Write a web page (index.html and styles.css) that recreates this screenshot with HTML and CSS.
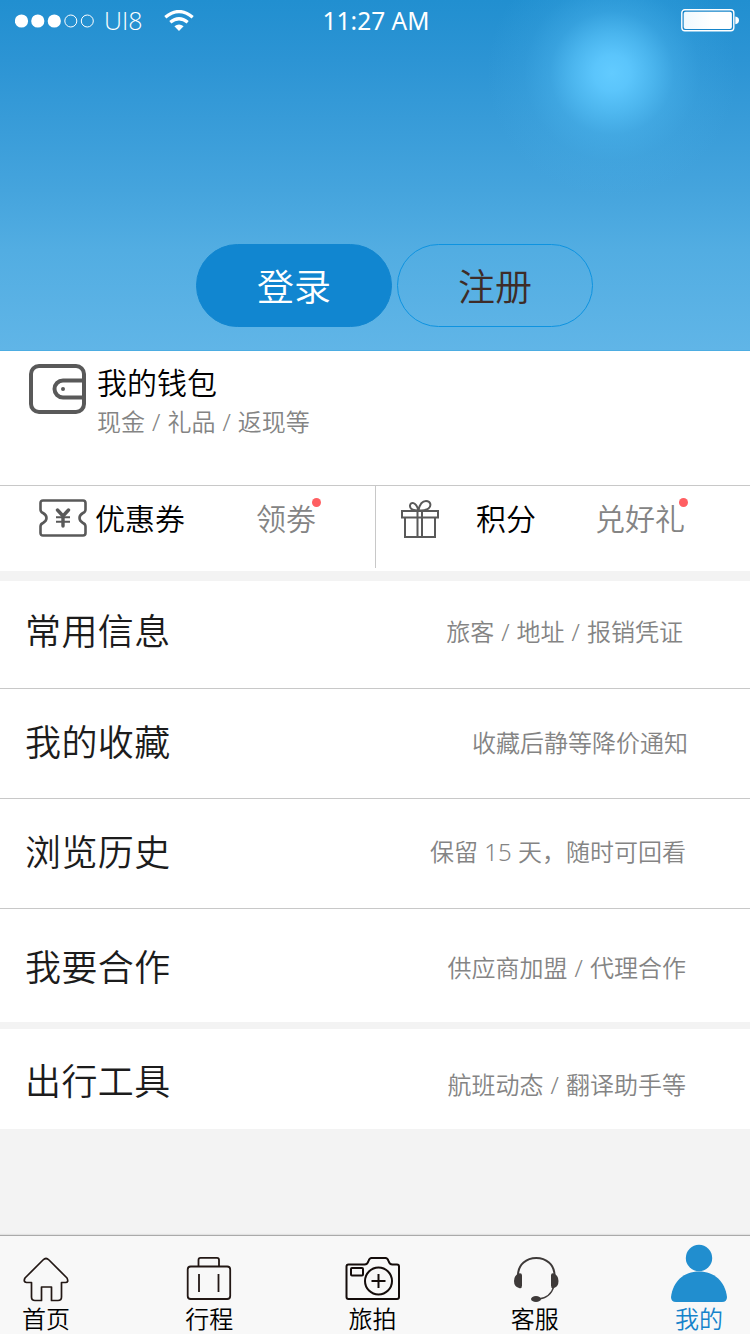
FILE: index.html
```html
<!DOCTYPE html>
<html lang="zh-CN">
<head>
<meta charset="utf-8">
<title>我的</title>
<link rel="stylesheet" href="styles.css">
</head>
<body>
<div class="screen">
  <header class="hero">
    <div class="status">
      <div class="status-left">
        <svg class="signal" width="80" height="16" viewBox="0 0 80 16"><g fill="#fff"><circle cx="6.500" cy="8" r="6.600"/><circle cx="22.800" cy="8" r="6.600"/><circle cx="39.300" cy="8" r="6.600"/></g><g fill="none" stroke="#fff"><circle cx="55.800" cy="8" r="6"/><circle cx="72.300" cy="8" r="6"/></g></svg>
        <span class="carrier">UI8</span>
        <svg class="wifi" width="30" height="22" viewBox="0 0 30 22"><g fill="none" stroke="#fff" stroke-width="3.200"><path d="M1.300 7.200Q15-4.200 28.700 7.200"/><path d="M6.300 12.300Q15 5.200 23.700 12.300"/></g><path fill="#fff" d="M10.400 16.300Q15 12.600 19.600 16.300L15 21Z"/></svg>
      </div>
      <time class="clock">11:27 AM</time>
      <svg class="battery" width="58" height="23" viewBox="0 0 58 23"><defs><linearGradient id="charge"><stop offset="0" stop-color="#eff9fe"/><stop offset=".6" stop-color="#fff"/></linearGradient></defs><rect x=".8" y=".8" width="52" height="21" rx="3" fill="#1685ca" stroke="#fff" stroke-width="1.400"/><rect x="2.700" y="2.700" width="48.200" height="17.200" rx="2" fill="url(#charge)"/><path fill="#fff" d="M54.300 7.500Q58 8 58 11.300T54.300 15.200Z"/></svg>
    </div>
    <div class="auth">
      <button class="btn btn-login">登录</button>
      <button class="btn btn-register">注册</button>
    </div>
  </header>

  <section class="wallet">
    <svg width="58" height="50" viewBox="0 0 58 50" fill="none" stroke="#595959" stroke-width="4"><rect x="2" y="2" width="53" height="46" rx="8"/><path d="M56 16.500H34a8.500 8.500 0 0 0-8.500 8.500a8.500 8.500 0 0 0 8.500 8.500H56"/><circle cx="34" cy="25" r="2" fill="#595959" stroke="none"/></svg>
    <div class="wallet-text">
      <h2 class="wallet-title">我的钱包</h2>
      <p class="wallet-note">现金 / 礼品 / 返现等</p>
    </div>
  </section>

  <section class="perks">
    <div class="perk perk-coupon">
      <svg class="perk-icon" width="48" height="38" viewBox="0 0 48 38" fill="none" stroke="#595959" stroke-width="2.600" stroke-linejoin="round"><path d="M4 1.500H44Q46.500 1.500 46.500 4V10.500Q46.500 13 44 14Q40.500 16 40.500 19T44 24Q46.500 25 46.500 27.500V34Q46.500 36.500 44 36.500H4Q1.500 36.500 1.500 34V27.500Q1.500 25 4 24Q7.500 22 7.500 19T4 14Q1.500 13 1.500 10.500V4Q1.500 1.500 4 1.500Z"/><path stroke-width="3.400" stroke-linecap="round" d="M18.500 11L24 17L29.500 11M24 17V27"/><path stroke-width="2" d="M17 18.200H31M17 22.800H31"/></svg>
      <span class="perk-name">优惠券</span>
      <span class="perk-action">领劵<i class="dot"></i></span>
    </div>
    <div class="perk perk-points">
      <svg class="perk-icon" width="40" height="40" viewBox="0 0 40 40" fill="none" stroke="#595959" stroke-width="2"><path d="M2 12H38V18.500H2ZM5 18.500V38H35V18.500M17.500 12V38M22 12V38"/><path d="M18.500 11.500C15 11.500 9.500 11 10 6.500C10.500 2.500 16 2.500 18.500 11.500C19.500 6 21 2 26 2C31 2 31.500 7 28.500 9.500C26 11.500 22 11.500 18.500 11.500Z"/></svg>
      <span class="perk-name">积分</span>
      <span class="perk-action">兑好礼<i class="dot"></i></span>
    </div>
  </section>

  <ul class="menu">
    <li class="row row-info"><span class="row-title">常用信息</span><span class="row-note">旅客 / 地址 / 报销凭证</span></li>
    <li class="row row-favorites"><span class="row-title">我的收藏</span><span class="row-note">收藏后静等降价通知</span></li>
    <li class="row row-history"><span class="row-title">浏览历史</span><span class="row-note">保留 15 天，随时可回看</span></li>
    <li class="row row-partner"><span class="row-title">我要合作</span><span class="row-note">供应商加盟 / 代理合作</span></li>
  </ul>
  <ul class="menu">
    <li class="row row-tools"><span class="row-title">出行工具</span><span class="row-note">航班动态 / 翻译助手等</span></li>
  </ul>

  <nav class="tabs">
    <a class="tab"><svg width="58" height="60" viewBox="0 0 58 60" fill="none" stroke="#231815" stroke-width="1.700" stroke-linejoin="round"><path d="M26 15Q29 12 32 15L50 33Q52 37.500 48.500 37.500H44.500V52Q44.500 55.500 41 55.500H34.500V42H24.500V55.500H18Q14.500 55.500 14.500 52V37.500H9.500Q6 37 8 33Z"/></svg><span>首页</span></a>
    <a class="tab"><svg width="58" height="60" viewBox="0 0 58 60" fill="none" stroke="#231815" stroke-width="1.800"><rect x="7.700" y="21.500" width="42.500" height="32.500" rx="3"/><path d="M18.500 21.500V15Q18.500 12.800 20.500 12.800H37Q39 12.800 39 15V21.500M19 29V47M38.500 29V47"/></svg><span>行程</span></a>
    <a class="tab"><svg width="58" height="60" viewBox="0 0 58 60" fill="none" stroke="#140c0a" stroke-width="2"><path stroke-linejoin="round" d="M4.500 19.500H20.500Q23.500 19.500 24.500 16Q25.500 13 27.500 13H41.500Q43.500 13 44.500 16Q45.500 19.500 48.500 19.500H53Q55 19.500 55 21.500V52Q55 54 53 54H4.500Q2.500 54 2.500 52V21.500Q2.500 19.500 4.500 19.500Z"/><rect x="7" y="23" width="12" height="7.500" rx="1"/><circle cx="34.500" cy="36" r="13.500"/><path d="M27.500 36H41.500M34.500 29V43"/></svg><span>旅拍</span></a>
    <a class="tab tab-service"><svg width="58" height="60" viewBox="0 0 58 60" fill="none" stroke="#3e3a39"><path stroke-width="2" d="M12 31C11.500 7 49 7 48.500 31"/><path stroke-width="1.300" d="M48 41Q44.500 53 32.500 54"/><g fill="#3e3a39" stroke="none"><path d="M12.500 28.500Q16 27.500 16 30.500V40.500Q16 44 13 43Q8 41.500 8 36Q8 30.500 12.500 28.500ZM48 28.500Q45 27.500 45 30.500V40.500Q45 44 48 43Q52.500 41.500 52.500 36Q52.500 30.500 48 28.500Z"/><ellipse cx="30" cy="54" rx="5" ry="3"/></g></svg><span>客服</span></a>
    <a class="tab tab-active"><svg width="58" height="60" viewBox="0 0 58 60" fill="#218ecf"><circle cx="29" cy="13" r="13.200"/><path d="M1 52C3 36 14 26.500 29 26.500S55 36 57 52Q57 57 52 57H6Q1 57 1 52Z"/></svg><span>我的</span></a>
  </nav>
</div>
</body>
</html>
```
FILE: styles.css
```css
* {
  box-sizing: border-box;
}

body,
h2,
p,
ul {
  margin: 0;
  padding: 0;
}

body {
  font-family: "Noto Sans", "Noto Sans CJK SC", sans-serif;
  font-weight: 350;
  color: #000;
}

.screen {
  width: 750px;
  height: 1334px;
  display: flex;
  flex-direction: column;
  background: #f3f3f3;
  overflow: hidden;
}

.hero {
  height: 351px;
  display: flex;
  flex-direction: column;
  justify-content: space-between;
  padding-bottom: 23px;
  border-bottom: 1px solid #4dade2;
  background:
    radial-gradient(circle at 612px 73px, #62cbff 0, rgba(94, 200, 254, .94) 18px, rgba(88, 195, 249, .7) 40px, rgba(80, 186, 241, .38) 62px, rgba(75, 180, 235, .15) 88px, rgba(70, 175, 230, 0) 125px),
    linear-gradient(#218fd0 0, #2c94d4 60px, #45a4dd 190px, #52ade2 250px, #60b5e7 350px);
}

.status {
  display: grid;
  grid-template-columns: 1fr auto 1fr;
  align-items: center;
  height: 41px;
  padding: 0 11px 0 15px;
  color: #fff;
}

.status-left {
  display: flex;
  align-items: center;
}

.carrier {
  margin-left: 9px;
  font-family: "Open Sans", "Noto Sans", sans-serif;
  font-size: 25px;
  line-height: 41px;
}

.wifi {
  margin-left: 21px;
}

.clock {
  margin-right: 2px;
  font-family: "Noto Sans", sans-serif;
  font-size: 24.500px;
  font-weight: 400;
  line-height: 41px;
}

.battery {
  justify-self: end;
}

.auth {
  display: flex;
  gap: 5px;
  padding-left: 196px;
}

.btn {
  width: 196px;
  height: 83px;
  padding: 0 0 2px;
  border: 1px solid #0e93e0;
  border-radius: 42px;
  background: none;
  font: inherit;
  font-size: 37px;
  color: #3e2c28;
}

.btn-login {
  border-color: #1186d0;
  background: #1186d0;
  color: #fff;
}

.wallet {
  display: flex;
  gap: 10px;
  height: 134px;
  padding: 13px 29px 0;
  background: #fff;
}

.wallet-title {
  margin-top: -1px;
  font-size: 30px;
  font-weight: inherit;
  line-height: 40px;
}

.wallet-note {
  margin-top: 1px;
  font-size: 24px;
  line-height: 36px;
  word-spacing: .8px;
  color: #848484;
}

.perks {
  display: flex;
  height: 86px;
  border-top: 1px solid #c8c8c8;
  background: #fff;
}

.perk {
  display: flex;
  align-items: flex-start;
  height: 82px;
  padding-top: 13px;
  font-size: 30px;
  line-height: 40px;
}

.perk-coupon {
  width: 376px;
  padding-left: 39px;
  border-right: 1px solid #c8c8c8;
}

.perk-coupon .perk-name {
  margin: 0 71px 0 8px;
}

.perk-points {
  padding-left: 24px;
}

.perk-points .perk-name {
  margin: 0 59px 0 36px;
}

.perk-action {
  position: relative;
  color: #848484;
}

.dot {
  position: absolute;
  top: -1px;
  right: -5px;
  width: 9px;
  height: 9px;
  border-radius: 50%;
  background: #ff5f62;
}

.perk-points .dot {
  right: -3px;
}

.menu {
  margin-top: 10px;
  list-style: none;
  background: #fff;
}

.menu + .menu {
  margin-top: 7px;
}

.row {
  display: flex;
  justify-content: space-between;
  align-items: center;
  height: 110px;
  padding: 0 62px 2px 25px;
  border-bottom: 1px solid #c8c8c8;
}

.row-title {
  font-size: 36px;
  line-height: 50px;
  letter-spacing: .4px;
  color: #1c1c1c;
}

.row-note {
  font-size: 24px;
  line-height: 36px;
  word-spacing: .8px;
  color: #848484;
}

.row-info {
  height: 108px;
  padding-right: 67px;
  padding-bottom: 5px;
}

.row-history {
  padding-right: 64px;
}

.row-history .row-note {
  padding-bottom: 2px;
  word-spacing: 0;
}

.row-partner {
  height: 113px;
  padding-right: 64px;
  padding-top: 5px;
  padding-bottom: 0;
  border-bottom: 0;
}

.row-tools {
  height: 100px;
  padding-right: 64px;
  padding-top: 5px;
  padding-bottom: 0;
  border-bottom: 0;
}

.row-tools .row-note {
  padding-top: 6px;
}

.tabs {
  display: flex;
  justify-content: space-between;
  height: 99px;
  margin-top: auto;
  padding: 9px 22px 0 17px;
  border-top: 1px solid #aaa;
  background: #f8f8f8;
  box-shadow: 0 -1px 1px #e2e2e2;
}

.tab {
  display: flex;
  flex-direction: column;
  align-items: center;
  width: 58px;
  font-size: 24px;
  line-height: 28px;
}

.tab svg {
  overflow: visible;
}

.tab-service {
  margin: 0 1px 0 -1px;
}

.tab-active {
  color: #1583cb;
}
```
